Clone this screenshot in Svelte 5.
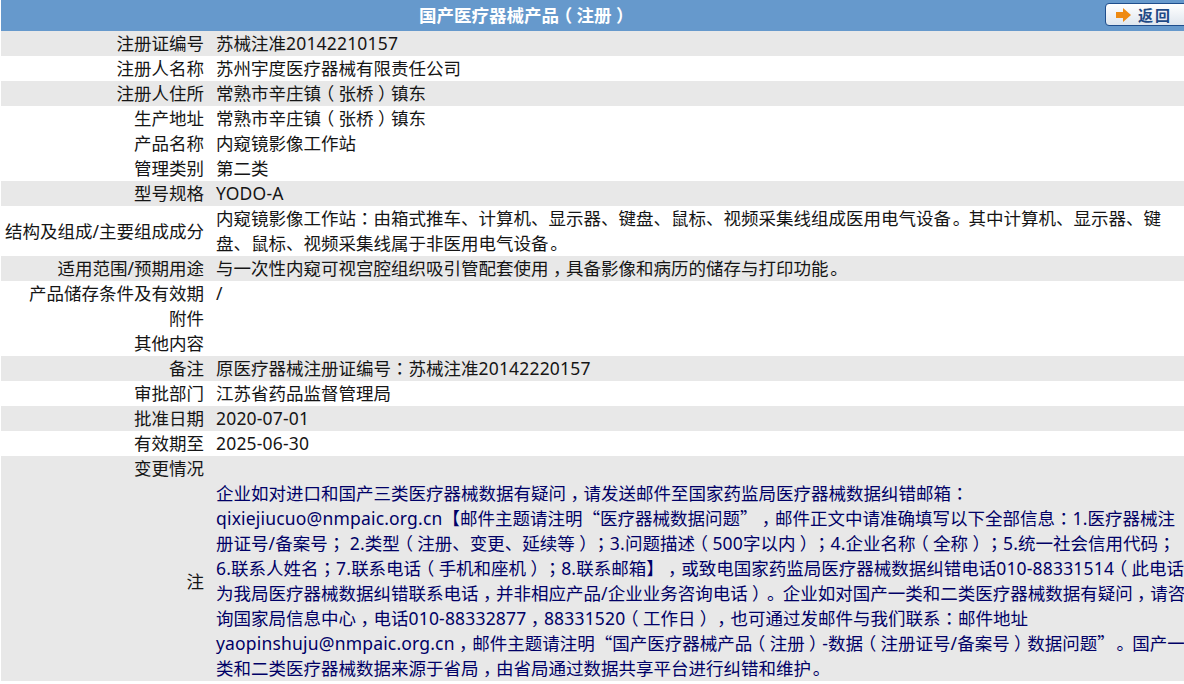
<script lang="ts">
	// product registration detail table
	const rows = [
		{ label: '注册证编号', value: '苏械注准20142210157', shade: true },
		{ label: '注册人名称', value: '苏州宇度医疗器械有限责任公司' },
		{ label: '注册人住所', value: '常熟市辛庄镇（张桥）镇东', shade: true },
		{ label: '生产地址', value: '常熟市辛庄镇（张桥）镇东' },
		{ label: '产品名称', value: '内窥镜影像工作站' },
		{ label: '管理类别', value: '第二类' },
		{ label: '型号规格', value: 'YODO-A', shade: true },
		{
			label: '结构及组成/主要组成成分',
			value:
				'内窥镜影像工作站：由箱式推车、计算机、显示器、键盘、鼠标、视频采集线组成医用电气设备。其中计算机、显示器、键盘、鼠标、视频采集线属于非医用电气设备。'
		},
		{
			label: '适用范围/预期用途',
			value: '与一次性内窥可视宫腔组织吸引管配套使用，具备影像和病历的储存与打印功能。',
			shade: true
		},
		{ label: '产品储存条件及有效期', value: '/' },
		{ label: '附件', value: '' },
		{ label: '其他内容', value: '' },
		{ label: '备注', value: '原医疗器械注册证编号：苏械注准20142220157', shade: true },
		{ label: '审批部门', value: '江苏省药品监督管理局' },
		{ label: '批准日期', value: '2020-07-01', shade: true },
		{ label: '有效期至', value: '2025-06-30' },
		{ label: '变更情况', value: '', shade: true },
		{
			label: '注',
			shade: true,
			note: true,
			value:
				'企业如对进口和国产三类医疗器械数据有疑问，请发送邮件至国家药监局医疗器械数据纠错邮箱：qixiejiucuo@nmpaic.org.cn【邮件主题请注明“医疗器械数据问题”，邮件正文中请准确填写以下全部信息：1.医疗器械注册证号/备案号； 2.类型（注册、变更、延续等）；3.问题描述（500字以内）；4.企业名称（全称）；5.统一社会信用代码；6.联系人姓名；7.联系电话（手机和座机）；8.联系邮箱】，或致电国家药监局医疗器械数据纠错电话010-88331514（此电话为我局医疗器械数据纠错联系电话，并非相应产品/企业业务咨询电话）。企业如对国产一类和二类医疗器械数据有疑问，请咨询国家局信息中心，电话010-88332877，88331520（工作日），也可通过发邮件与我们联系：邮件地址yaopinshuju@nmpaic.org.cn，邮件主题请注明“国产医疗器械产品（注册）-数据（注册证号/备案号）数据问题”。国产一类和二类医疗器械数据来源于省局，由省局通过数据共享平台进行纠错和维护。'
		}
	];

	// punctuation sits centred in its box in the original font, so split it out
	const classOf = (part: string) => {
		if (part === '（') return 'open';
		if (part === '）') return 'close';
		if (part === '，') return 'comma';
		if (part === '。') return 'stop';
		if (/^[：；]$/.test(part)) return 'mid';
		if (/^[“”]$/.test(part)) return 'quote';
		if (/^[A-Za-z0-9@.\-/]+$/.test(part)) return 'latin';
		return '';
	};

	const parts = (text: string) =>
		text
			.split(/([（）：；，。“”]|[A-Za-z0-9@.\-/]+)/)
			.filter(Boolean)
			.map((text) => ({ text, cls: classOf(text) }));
</script>

{#snippet rich(text)}{#each parts(text) as p}<span class={p.cls}>{p.text}</span>{/each}{/snippet}

<div class="page">
	<div class="head">
		<span class="title">{@render rich('国产医疗器械产品（注册）')}</span>
		<button class="back">
			<svg width="15" height="14" viewBox="0 0 15 14"><path d="M0 4h7V0l8 7-8 7v-4H0z" fill="#ee8a12" /></svg>
			<span>返回</span>
		</button>
	</div>
	{#each rows as row}
		<div class="row" class:shade={row.shade}>
			<div class="label">{row.label}</div>
			<div class="value" class:note={row.note}>{@render rich(row.value)}</div>
		</div>
	{/each}
</div>

<style>
	:global(body) {
		background: #fff;
		overflow: hidden;
	}

	.page {
		margin-left: 1px;
		width: 1190px;
		font-family: 'Noto Sans', 'Noto Sans CJK SC', sans-serif;
		font-size: 17.5px;
		line-height: 25px;
		color: #151515;
		text-spacing-trim: space-all;
	}

	.head {
		position: relative;
		height: 31px;
		background: #6699cc;
		display: flex;
		justify-content: center;
		align-items: center;
		padding-right: 144px;
		box-sizing: border-box;
	}

	.title {
		color: #fff;
		font-weight: 700;
		white-space: nowrap;
	}

	.back {
		position: absolute;
		left: 1104px;
		top: 3px;
		width: 90px;
		height: 23px;
		padding: 0 0 0 10px;
		display: flex;
		align-items: center;
		gap: 7px;
		border: 1px solid #1f4e8c;
		border-radius: 4px;
		background: linear-gradient(#fff, #dfe6ee);
		color: #1f4a86;
		font-family: 'Noto Sans CJK SC', sans-serif;
		font-size: 15px;
		font-weight: 700;
		letter-spacing: 2px;
	}

	.row {
		display: grid;
		grid-template-columns: 203px 1fr;
		column-gap: 12px;
	}

	.shade {
		background: #e8e8e8;
	}

	.label {
		align-self: center;
		text-align: right;
	}

	.value {
		min-height: 25px;
		width: 972px;
	}

	.note {
		color: #000066;
	}

	.latin {
		letter-spacing: 0.18px;
	}

	.mid,
	.quote,
	.comma,
	.stop,
	.open,
	.close {
		line-height: 0;
	}

	.mid {
		font-family: 'Noto Sans CJK TC', sans-serif;
	}

	.quote {
		font-family: 'Noto Sans CJK SC', sans-serif;
	}

	/* nudge punctuation to the middle of its box */
	.comma,
	.close {
		font-family: 'Noto Sans CJK SC', sans-serif;
		padding-left: 0.25em;
		margin-right: -0.25em;
	}

	.stop {
		font-family: 'Noto Sans CJK SC', sans-serif;
		padding-left: 0.1em;
		margin-right: -0.1em;
	}

	.open {
		font-family: 'Noto Sans CJK SC', sans-serif;
		padding-right: 0.25em;
		margin-left: -0.25em;
	}
</style>
